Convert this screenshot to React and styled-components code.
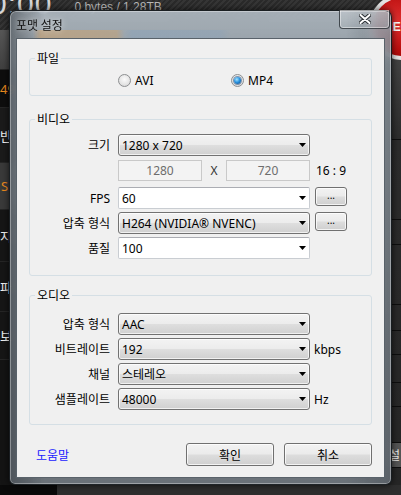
import React from 'react'
import styled, { createGlobalStyle } from 'styled-components'

const GlobalStyle = createGlobalStyle`
  html, body { margin: 0; padding: 0; background: #111; }
  body { font-family: "Noto Sans", "Noto Sans CJK KR", sans-serif; }
  * { box-sizing: border-box; }
`

const Screen = styled.div`
  position: relative;
  width: 401px;
  height: 495px;
  overflow: hidden;
  display: flex;
  flex-direction: column;
  background: #141414;
`

// ---- app behind the dialog ----
const TopBar = styled.div`
  flex: none;
  height: 30px;
  display: flex;
  align-items: flex-start;
  background: repeating-linear-gradient(135deg, #2a2a2a 0 2px, #363636 2px 4px);
`
const Clock = styled.div`
  font-family: "Liberation Sans", sans-serif;
  font-size: 30px;
  line-height: 30px;
  letter-spacing: 1px;
  color: #d6d6d6;
  margin: -11px 0 0 -10px;
`
const Usage = styled.div`
  font-family: "Liberation Sans", sans-serif;
  font-size: 12px;
  line-height: 14px;
  color: #b8b8b8;
  margin-left: 22px;
`
const RecButton = styled.div`
  position: relative;
  z-index: 1;
  margin: -6px -34px 0 auto;
  width: 66px;
  height: 66px;
  flex: none;
  border-radius: 50%;
  border: 4px solid #e4e4e4;
  background: radial-gradient(circle at 40% 40%, #e23030 0%, #b80d0d 60%, #8a0606 100%);
  display: flex;
  align-items: center;
  padding-left: 11px;
  font-family: "Liberation Sans", sans-serif;
  font-weight: bold;
  font-size: 12px;
  color: #fff;
`
const Body = styled.div`
  flex: 1;
  display: flex;
`
const Sidebar = styled.div`
  width: 40px;
  display: flex;
  flex-direction: column;
`
const SideItem = styled.div`
  height: ${p => p.$h}px;
  flex: none;
  display: flex;
  align-items: center;
  padding-left: ${p => p.$x}px;
  border-bottom: 1px solid #262626;
  background: ${p => p.$bg};
  color: ${p => (p.$accent ? '#f08c1e' : '#f2f2f2')};
  font-size: 13px;
`
const Main = styled.div`
  flex: 1;
  background: #1c1c1c;
`
const RightPanel = styled.div`
  width: 12px;
  display: flex;
  flex-direction: column;
  background: linear-gradient(#4a4a4a, #2c2c2c 110px, #262626);
`
const RightRow = styled.div`
  height: ${p => p.$h}px;
  flex: none;
  border-bottom: 1px solid #0e0e0e;
  background: ${p => p.$bg || 'transparent'};
  color: #eee;
  font-size: 12px;
  display: flex;
  align-items: center;
`
const BottomBar = styled.div`
  flex: none;
  height: 10px;
  display: flex;
  background: #2e2e2e;
  &::before {
    content: '';
    width: 57px;
    background: #0a0a0a;
  }
`

// ---- dialog ----
const Dialog = styled.div`
  position: absolute;
  z-index: 2;
  left: 9px;
  top: 10px;
  width: 383px;
  height: 475px;
  display: flex;
  flex-direction: column;
  border: 1px solid rgba(18, 22, 26, 0.9);
  border-radius: 7px 7px 6px 6px;
  background:
    linear-gradient(90deg, rgba(60, 66, 72, 0.6) 0%, rgba(60, 66, 72, 0) 9%, rgba(60, 66, 72, 0) 88%, rgba(60, 66, 72, 0.35) 100%),
    linear-gradient(180deg, rgba(184, 195, 204, 0.86) 0%, rgba(172, 183, 192, 0.84) 12%, rgba(140, 149, 157, 0.86) 60%, rgba(118, 126, 134, 0.88) 100%);
  backdrop-filter: blur(5px);
  box-shadow: inset 0 0 0 1px rgba(255, 255, 255, 0.35), 0 0 7px rgba(0, 0, 0, 0.7);
`
const TitleBar = styled.div`
  height: 27px;
  flex: none;
  display: flex;
  align-items: center;
  padding: 0 1px 0 6px;
  background:
    linear-gradient(90deg, rgba(0, 0, 0, 0) 6%, rgba(205, 160, 105, 0.55) 8%, rgba(205, 160, 105, 0.45) 28%, rgba(0, 0, 0, 0) 30%, rgba(130, 160, 190, 0.35) 32%, rgba(130, 160, 190, 0.3) 55%, rgba(0, 0, 0, 0) 58%) bottom / 100% 8px no-repeat;
`
const Title = styled.div`
  font-family: "Noto Sans CJK KR", sans-serif;
  font-size: 12px;
  color: #111;
  text-shadow: 0 0 6px rgba(255, 255, 255, 0.8);
`
const CloseButton = styled.div`
  align-self: flex-start;
  margin: -1px 0 0 auto;
  width: 51px;
  height: 19px;
  display: flex;
  align-items: center;
  justify-content: center;
  border: 1px solid rgba(30, 36, 42, 0.75);
  border-top: none;
  border-radius: 0 0 4px 4px;
  background: linear-gradient(rgba(255, 255, 255, 0.25), rgba(255, 255, 255, 0.05));
  box-shadow: inset 0 0 0 1px rgba(255, 255, 255, 0.45);
`
const ClientArea = styled.div`
  flex: 1;
  margin: 0 6px 6px;
  border: 1px solid #59626a;
  background: #f0f0f0;
  padding: 11px 12px 11px;
  display: flex;
  flex-direction: column;
  font-size: 12px;
  color: #000;
`
const Group = styled.fieldset`
  margin: ${p => p.$mt}px 0 0;
  padding: ${p => p.$pt}px 0 ${p => p.$pb}px;
  border: 1px solid #d5dfe5;
  border-radius: 3px;
  min-inline-size: 0;
`
const Legend = styled.legend`
  margin-left: 5px;
  padding: 0 2px;
  height: 16px;
  line-height: 16px;
  font-size: 12px;
  font-family: "Noto Sans CJK KR", sans-serif;
`
const RadioRow = styled.div`
  height: 16px;
  display: flex;
  align-items: center;
  padding-left: 88px;
`
const RadioOption = styled.label`
  width: 113px;
  display: flex;
  align-items: center;
  gap: 4px;
`
const RadioCircle = styled.span`
  width: 13px;
  height: 13px;
  border-radius: 50%;
  border: 1px solid #8d8f91;
  background: radial-gradient(circle at 50% 40%, #fbfbfb 0%, #e6e6e6 55%, #cfcfcf 100%);
  display: flex;
  align-items: center;
  justify-content: center;
`
const RadioDot = styled.span`
  width: 7px;
  height: 7px;
  border-radius: 50%;
  background: radial-gradient(circle at 40% 35%, #a6e4ff 0%, #2b94e0 45%, #0b3f7e 100%);
  box-shadow: 0 0 0 1px rgba(20, 60, 110, 0.5);
`
const Row = styled.div`
  height: ${p => p.$h || 22}px;
  margin-top: ${p => p.$mt ?? 3}px;
  display: flex;
  align-items: center;
`
const Label = styled.div`
  width: 80px;
  flex: none;
  margin-right: 8px;
  text-align: right;
`
const ComboBox = styled.div`
  width: 192px;
  height: 22px;
  flex: none;
  display: flex;
  align-items: center;
  justify-content: space-between;
  padding: 0 3px 0 3px;
  border: 1px solid ${p => (p.$editable ? '#c9cdd2' : '#727272')};
  border-top-color: ${p => (p.$editable ? '#abadb3' : '#727272')};
  border-radius: ${p => (p.$editable ? 2 : 3)}px;
  background: ${p =>
    p.$editable
      ? '#fff'
      : 'linear-gradient(#f3f3f3 0%, #ececec 48%, #dedede 52%, #d0d0d0 100%)'};
  box-shadow: ${p => (p.$editable ? 'none' : 'inset 0 0 0 1px rgba(255,255,255,0.7)')};
`
const Arrow = styled.svg`
  width: 7px;
  height: 4px;
  flex: none;
`
const DimRow = styled.div`
  width: 192px;
  display: flex;
  align-items: center;
`
const DimBox = styled.div`
  width: 84px;
  height: 21px;
  border: 1px solid #c9c9c9;
  background: #f3f3f3;
  color: #6d6d6d;
  display: flex;
  align-items: center;
  justify-content: center;
`
const DimSep = styled.div`
  flex: 1;
  text-align: center;
  color: #333;
`
const Suffix = styled.div`
  margin-left: ${p => p.$ml ?? 5}px;
`
const winButton = `
  border: 1px solid #707070;
  border-radius: 3px;
  background: linear-gradient(#f2f2f2 0%, #ebebeb 48%, #dddddd 52%, #cfcfcf 100%);
  box-shadow: inset 0 0 0 1px rgba(255, 255, 255, 0.75);
  display: flex;
  align-items: center;
  justify-content: center;
  font-size: 12px;
  color: #000;
`
const SmallButton = styled.div`
  ${winButton}
  align-self: flex-start;
  margin-left: 5px;
  width: 32px;
  height: 19px;
  font-size: 10px;
  padding-bottom: 3px;
`
const Footer = styled.div`
  margin-top: 18px;
  height: 23px;
  display: flex;
  align-items: center;
  padding-left: 7px;
`
const HelpLink = styled.a`
  color: #1a1aff;
  text-decoration: none;
  font-family: "Noto Sans CJK KR", sans-serif;
  cursor: pointer;
`
const ButtonRow = styled.div`
  margin-left: auto;
  display: flex;
  gap: 10px;
`
const DialogButton = styled.div`
  ${winButton}
  width: 88px;
  height: 23px;
  font-family: "Noto Sans CJK KR", sans-serif;
`

function Combo({ value, editable }) {
  return (
    <ComboBox $editable={editable}>
      <span>{value}</span>
      <Arrow viewBox="0 0 7 4">
        <path d="M0 0H7L3.5 4Z" fill="#000" />
      </Arrow>
    </ComboBox>
  )
}

function Radio({ label, checked }) {
  return (
    <RadioOption>
      <RadioCircle>{checked && <RadioDot />}</RadioCircle>
      {label}
    </RadioOption>
  )
}

const sideItems = [
  { h: 40, bg: 'linear-gradient(#575757, #404040)' },
  { h: 38, bg: '#0e0e0e', text: '49', accent: true, x: 0 },
  { h: 55, bg: '#1b1b1b', text: '반', x: -2 },
  { h: 47, bg: '#3a3a3a', text: 'S', accent: true, x: 1 },
  { h: 52, bg: '#161616', text: '지', x: -2 },
  { h: 50, bg: '#161616', text: '파', x: -1 },
  { h: 48, bg: '#161616', text: '보', x: -2 },
]

const rightRows = [110, 80, 25, 60, 26, 24, 28, 24, 36, { h: 25, text: '설', bg: '#555' }]

const audioRows = [
  { label: '압축 형식', value: 'AAC' },
  { label: '비트레이트', value: '192', unit: 'kbps' },
  { label: '채널', value: '스테레오' },
  { label: '샘플레이트', value: '48000', unit: 'Hz' },
]

export default function App() {
  return (
    <Screen>
      <GlobalStyle />
      <TopBar>
        <Clock>0:00</Clock>
        <Usage>0 bytes / 1.28TB</Usage>
        <RecButton>REC</RecButton>
      </TopBar>
      <Body>
        <Sidebar>
          {sideItems.map((s, i) => (
            <SideItem key={i} $h={s.h} $bg={s.bg} $accent={s.accent} $x={s.x || 0}>
              {s.text}
            </SideItem>
          ))}
        </Sidebar>
        <Main />
        <RightPanel>
          {rightRows.map((r, i) =>
            typeof r === 'number' ? (
              <RightRow key={i} $h={r} />
            ) : (
              <RightRow key={i} $h={r.h} $bg={r.bg}>{r.text}</RightRow>
            )
          )}
        </RightPanel>
      </Body>
      <BottomBar />

      <Dialog>
        <TitleBar>
          <Title>포맷 설정</Title>
          <CloseButton>
            <svg width="12" height="10" viewBox="0 0 12 10">
              <path d="M1.5 1L10.5 9M10.5 1L1.5 9" stroke="#2b3034" strokeWidth="4" strokeLinecap="round" />
              <path d="M1.5 1L10.5 9M10.5 1L1.5 9" stroke="#fff" strokeWidth="2" strokeLinecap="round" />
            </svg>
          </CloseButton>
        </TitleBar>
        <ClientArea>
          <Group $mt={0} $pt={6} $pb={7}>
            <Legend>파일</Legend>
            <RadioRow>
              <Radio label="AVI" />
              <Radio label="MP4" checked />
            </RadioRow>
          </Group>

          <Group $mt={15} $pt={7} $pb={16}>
            <Legend>비디오</Legend>
            <Row $mt={0}>
              <Label>크기</Label>
              <Combo value="1280 x 720" />
            </Row>
            <Row $mt={4} $h={21}>
              <Label />
              <DimRow>
                <DimBox>1280</DimBox>
                <DimSep>X</DimSep>
                <DimBox>720</DimBox>
              </DimRow>
              <Suffix $ml={6}>16 : 9</Suffix>
            </Row>
            <Row $mt={6}>
              <Label>FPS</Label>
              <Combo value="60" editable />
              <SmallButton>...</SmallButton>
            </Row>
            <Row>
              <Label>압축 형식</Label>
              <Combo value="H264 (NVIDIA® NVENC)" />
              <SmallButton>...</SmallButton>
            </Row>
            <Row>
              <Label>품질</Label>
              <Combo value="100" editable />
            </Row>
          </Group>

          <Group $mt={11} $pt={10} $pb={14}>
            <Legend>오디오</Legend>
            {audioRows.map((r, i) => (
              <Row key={r.label} $mt={i === 0 ? 0 : 3}>
                <Label>{r.label}</Label>
                <Combo value={r.value} />
                {r.unit && <Suffix $ml={4}>{r.unit}</Suffix>}
              </Row>
            ))}
          </Group>

          <Footer>
            <HelpLink>도움말</HelpLink>
            <ButtonRow>
              <DialogButton>확인</DialogButton>
              <DialogButton>취소</DialogButton>
            </ButtonRow>
          </Footer>
        </ClientArea>
      </Dialog>
    </Screen>
  )
}
